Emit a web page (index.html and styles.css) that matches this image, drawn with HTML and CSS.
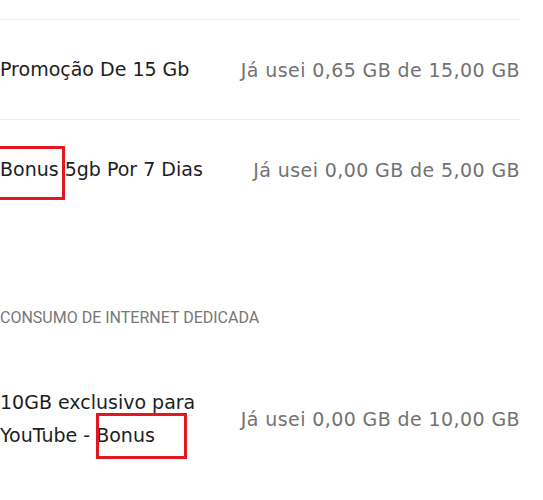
FILE: index.html
```html
<!DOCTYPE html>
<html lang="pt-BR">
<head>
  <meta charset="UTF-8" />
  <meta name="viewport" content="width=device-width, initial-scale=1.0" />
  <title>Consumo de internet</title>
  <link rel="stylesheet" href="styles.css">
</head>
<body>
  <div class="page">
    <div class="usage-list">
      <div class="usage-row">
        <div class="name">Promoção De 15 Gb</div>
        <div class="amount">Já usei 0,65 GB de 15,00 GB</div>
      </div>
      <div class="usage-row">
        <div class="name"><span class="mark mark-first">Bonus</span> 5gb Por 7 Dias</div>
        <div class="amount">Já usei 0,00 GB de 5,00 GB</div>
      </div>
    </div>

    <div class="section-title">Consumo de internet dedicada</div>

    <div class="usage-list">
      <div class="usage-row">
        <div class="name">10GB exclusivo para YouTube - <span class="mark mark-last">Bonus</span></div>
        <div class="amount">Já usei 0,00 GB de 10,00 GB</div>
      </div>
    </div>
  </div>
</body>
</html>
```

FILE: styles.css
```css
* { box-sizing: border-box; }
body {
  margin: 0;
  font-family: 'DejaVu Sans', sans-serif;
  background: #ffffff;
  color: #222;
}
.page {
  width: 520px;
  padding-top: 19px;
}
.usage-list {
  display: flex;
  flex-direction: column;
}
.usage-row {
  display: flex;
  align-items: center;
  gap: 24px;
  min-height: 100px;
  border-top: 1px solid #ececec;
}
.usage-list:last-child .usage-row {
  border-top: none;
}
.name {
  flex: 1;
  font-size: 19px;
  line-height: 33px;
  color: #1e1e1e;
}
.amount {
  flex: none;
  font-size: 19px;
  letter-spacing: 0.4px;
  color: #727272;
}
.section-title {
  margin-top: 89px;
  font-family: 'Roboto', sans-serif;
  font-size: 16px;
  line-height: 20px;
  text-transform: uppercase;
  color: #777;
}
.usage-list:last-child {
  margin-top: 41px;
}

/* red highlight boxes drawn over the screenshot */
.mark {
  position: relative;
}
.mark::after {
  content: '';
  position: absolute;
  border: 3px solid #e3171f;
}
.mark-first::after {
  left: -10px;
  right: -6px;
  top: -12px;
  bottom: -20px;
}
.mark-last::after {
  left: 0;
  right: -32px;
  top: -11px;
  bottom: -13px;
}
```
